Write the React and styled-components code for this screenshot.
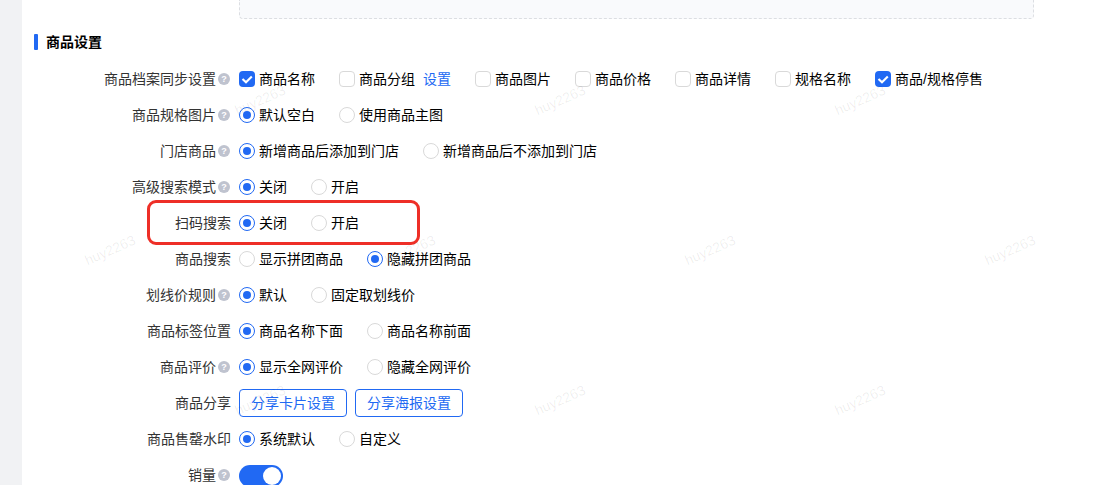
import React, {useState} from 'react'
import styled, {createGlobalStyle} from 'styled-components';

const syncOptions = [
    {name: '商品名称', checked: true},
    {name: '商品分组', link: '设置'},
    {name: '商品图片'},
    {name: '商品价格'},
    {name: '商品详情'},
    {name: '规格名称'},
    {name: '商品/规格停售', checked: true},
]

const watermarks = [
    [260, 100], [560, 100], [860, 100],
    [110, 250], [410, 250], [710, 250], [1010, 250],
    [260, 400], [560, 400], [860, 400],
]

const FormRow = ({label, help, marked, children}) => (
    <Row>
        <Label>
            <span>{label}</span>
            {help && <Help>?</Help>}
        </Label>
        <Controls>{children}</Controls>
        {marked && <Mark />}
    </Row>
)

const RadioRow = ({label, help, marked, options, initial = 0}) => {
    let [selected, setSelected] = useState(initial);

    return (
        <FormRow label={label} help={help} marked={marked}>
            {options.map((text, i) => (
                <Option key={text} onClick={() => setSelected(i)}>
                    <Radio $on={selected === i} />
                    {text}
                </Option>
            ))}
        </FormRow>
    )
}

const CheckOption = ({name, checked, link}) => {
    let [on, setOn] = useState(!!checked);

    return (
        <Option>
            <Checkbox $on={on} onClick={() => setOn(!on)}>
                {on && (
                    <svg width="16" height="16" viewBox="0 0 16 16">
                        <path d="M3.5 7.9L7 11.3L12.8 5.5" fill="none" stroke="#fff" strokeWidth="2.1" />
                    </svg>
                )}
            </Checkbox>
            {name}
            {link && <Link>{link}</Link>}
        </Option>
    )
}

const App = () => {
    let [sales, setSales] = useState(true);

    return (
        <Page>
            <GlobalStyle />
            <Side />
            <Panel>
                <DashedBox />
                <Title>商品设置</Title>
                <FormRow label="商品档案同步设置" help>
                    {syncOptions.map((item) => <CheckOption key={item.name} {...item} />)}
                </FormRow>
                <RadioRow label="商品规格图片" help options={['默认空白', '使用商品主图']} />
                <RadioRow label="门店商品" help options={['新增商品后添加到门店', '新增商品后不添加到门店']} />
                <RadioRow label="高级搜索模式" help options={['关闭', '开启']} />
                <RadioRow label="扫码搜索" marked options={['关闭', '开启']} />
                <RadioRow label="商品搜索" initial={1} options={['显示拼团商品', '隐藏拼团商品']} />
                <RadioRow label="划线价规则" help options={['默认', '固定取划线价']} />
                <RadioRow label="商品标签位置" options={['商品名称下面', '商品名称前面']} />
                <RadioRow label="商品评价" help options={['显示全网评价', '隐藏全网评价']} />
                <FormRow label="商品分享">
                    <OutlineBtn>分享卡片设置</OutlineBtn>
                    <OutlineBtn>分享海报设置</OutlineBtn>
                </FormRow>
                <RadioRow label="商品售罄水印" options={['系统默认', '自定义']} />
                <FormRow label="销量" help>
                    <Switch $on={sales} onClick={() => setSales(!sales)} />
                </FormRow>
            </Panel>
            {watermarks.map(([x, y]) => (
                <Watermark key={`${x}-${y}`} style={{left: x, top: y}}>huy2263</Watermark>
            ))}
        </Page>
    )
}

export default App;

const GlobalStyle = createGlobalStyle`
    body {
        margin: 0;
        overflow: hidden;
        background: #fff;
    }
    * {
        box-sizing: border-box;
    }
`

const Page = styled.div`
    position: relative;
    display: flex;
    height: 485px;
    overflow: hidden;
    font-family: "Liberation Sans", "Noto Sans CJK SC", sans-serif;
    font-size: 14px;
    line-height: 20px;
    color: #000;
`

const Side = styled.div`
    flex: none;
    width: 22px;
    background: #f1f2f4;
`

const Panel = styled.div`
    flex: 1;
    min-width: 0;
    padding-left: 12px;
`

const DashedBox = styled.div`
    width: 795px;
    height: 19px;
    margin-left: 205px;
    border: 1px dashed #dcdee2;
    border-top: none;
    border-radius: 0 0 4px 4px;
    background: #f9fafc;
`

const Title = styled.div`
    display: flex;
    align-items: center;
    height: 16px;
    margin: 15px 0 11px;
    font-weight: bold;
    &::before {
        content: '';
        width: 4px;
        height: 16px;
        margin-right: 8px;
        border-radius: 1px;
        background: #2169f3;
    }
`

const Row = styled.div`
    position: relative;
    display: flex;
    align-items: center;
    height: 36px;
`

const Label = styled.div`
    display: flex;
    flex: none;
    align-items: center;
    justify-content: flex-end;
    width: 197px;
    margin-right: 8px;
    color: #333;
`

const Help = styled.span`
    width: 12px;
    height: 12px;
    margin: 0 1px 0 2px;
    border-radius: 50%;
    background: #bfc3cf;
    color: #fff;
    font-size: 9px;
    font-weight: bold;
    line-height: 12px;
    text-align: center;
`

const Controls = styled.div`
    display: flex;
    align-items: center;
    white-space: nowrap;
`

const Option = styled.div`
    display: flex;
    align-items: center;
    margin-right: 24px;
`

const Radio = styled.span`
    display: flex;
    align-items: center;
    justify-content: center;
    width: 16px;
    height: 16px;
    margin-right: 4px;
    border: 1px solid ${(p) => p.$on ? '#2169f3' : '#d9d9d9'};
    border-radius: 50%;
    background: #fff;
    &::after {
        content: '';
        width: 8px;
        height: 8px;
        border-radius: 50%;
        background: ${(p) => p.$on ? '#2169f3' : 'transparent'};
    }
`

const Checkbox = styled.span`
    display: flex;
    align-items: center;
    justify-content: center;
    width: 16px;
    height: 16px;
    margin-right: 4px;
    border: ${(p) => p.$on ? 'none' : '1px solid #d9d9d9'};
    border-radius: 4px;
    background: ${(p) => p.$on ? '#2169f3' : '#fff'};
`

const Link = styled.a`
    margin-left: 8px;
    color: #2169f3;
`

const OutlineBtn = styled.button`
    width: 108px;
    height: 28px;
    margin-right: 8px;
    padding: 0;
    border: 1px solid #2169f3;
    border-radius: 4px;
    background: #fff;
    color: #2169f3;
    font: inherit;
`

const Switch = styled.div`
    display: flex;
    justify-content: ${(p) => p.$on ? 'flex-end' : 'flex-start'};
    width: 44px;
    height: 22px;
    margin-top: 2px;
    padding: 2px;
    border-radius: 11px;
    background: ${(p) => p.$on ? '#2169f3' : '#bfbfbf'};
    &::after {
        content: '';
        width: 18px;
        height: 18px;
        border-radius: 50%;
        background: #fff;
    }
`

const Mark = styled.div`
    position: absolute;
    top: -5px;
    left: 113px;
    width: 273px;
    height: 45px;
    border: 3px solid #ee2f27;
    border-radius: 9px;
`

const Watermark = styled.div`
    position: absolute;
    transform: translate(-50%, -50%) rotate(-24deg);
    color: rgba(0, 0, 0, 0.07);
    font-size: 14px;
    text-rendering: geometricPrecision;
    pointer-events: none;
`
